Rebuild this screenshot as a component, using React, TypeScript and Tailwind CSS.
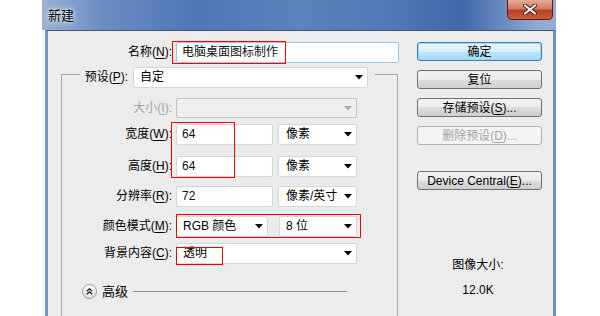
import React from "react";

const font = { fontFamily: '"Liberation Sans", "Noto Sans CJK SC", sans-serif' };

function Key({ k }: { k: string }) {
  return <span className="underline underline-offset-[2px]">{k}</span>;
}

function Arrow({ disabled = false }: { disabled?: boolean }) {
  return (
    <svg width="8" height="5" viewBox="0 0 8 5" className="shrink-0">
      <path d="M0 0H8L4 4.5Z" fill={disabled ? "#a9a9a9" : "#000"} />
    </svg>
  );
}

type SelectProps = {
  w: string;
  text?: string;
  disabled?: boolean;
  pad?: string;
};

function Select({ w, text = "", disabled = false, pad = "pl-[6px]" }: SelectProps) {
  return (
    <div
      className={`${w} h-[21px] flex items-center justify-between ${pad} pr-[4px] rounded-[2px] border ${
        disabled ? "bg-[#efefef] border-[#c4c4c4]" : "bg-white border-[#d3d6db]"
      }`}
    >
      <span className="text-black">{text}</span>
      <Arrow disabled={disabled} />
    </div>
  );
}

function Input({ w, text, focus = false }: { w: string; text: string; focus?: boolean }) {
  return (
    <div
      className={`${w} h-[21px] flex items-center pl-[5px] bg-white rounded-[2px] border ${
        focus ? "border-[#9fc2e6]" : "border-[#d3d6db]"
      }`}
    >
      <span className="text-[#111]">{text}</span>
    </div>
  );
}

function Label({ children, w = "w-[110px]", dim = false }: { children: React.ReactNode; w?: string; dim?: boolean }) {
  return (
    <div className={`${w} shrink-0 text-right ${dim ? "text-[#a3a3a3]" : "text-black"}`}>{children}</div>
  );
}

function Btn({ children, primary = false, disabled = false }: { children: React.ReactNode; primary?: boolean; disabled?: boolean }) {
  let cls =
    "border-[#707070] bg-[linear-gradient(#f2f2f2_0%,#ebebeb_50%,#dddddd_50%,#cfcfcf_100%)] text-black";
  if (primary)
    cls =
      "border-[#3c7fb1] bg-[linear-gradient(#eaf6fd_0%,#d9f0fc_50%,#bee6fd_50%,#a7d9f5_100%)] text-black shadow-[inset_0_0_0_1px_#9fd6f5]";
  if (disabled) cls = "border-[#adb2b5] bg-[#f4f4f4] text-[#a3a3a3]";
  return (
    <div className={`w-[125px] h-[19px] flex items-center justify-center rounded-[3px] border ${cls}`}>
      {children}
    </div>
  );
}

export default function App() {
  return (
    <div className="w-[600px] h-[316px] bg-white overflow-hidden text-[12px] leading-none" style={font}>
      <div className="ml-[42px] w-[514px]">
        {/* title bar */}
        <div className="h-[30px] flex justify-between bg-[linear-gradient(90deg,#9ab2d6_0%,#6a8cc3_12%,#4f77b6_30%,#5d83bd_50%,#5278b6_68%,#3f69aa_82%,#93acd3_97%)]">
          <div className="pl-[6px] pt-[9px] text-[13px] text-black [text-shadow:0_0_6px_#fff,0_0_3px_#fff]">新建</div>
          <div className="mr-[3px] w-[46px] h-[20px] flex items-center justify-center rounded-b-[5px] border border-t-0 border-[#5b1d12] bg-[linear-gradient(#e9ab97_0%,#d27a62_45%,#bb3f25_55%,#cf5a3f_100%)]">
            <svg width="14" height="11" viewBox="0 0 14 11">
              <path d="M2 1.5L12 9.5M12 1.5L2 9.5" stroke="#4a1a12" strokeWidth="4" strokeLinecap="round" />
              <path d="M2 1.5L12 9.5M12 1.5L2 9.5" stroke="#fff" strokeWidth="2.2" strokeLinecap="round" />
            </svg>
          </div>
        </div>

        {/* frame + body */}
        <div className="flex bg-[#f3f6fa]">
          <div className="w-[3px] shrink-0" />
          <div className="relative flex-1 h-[300px] overflow-hidden bg-[#ececec] border-l-[3px] border-r-[3px] border-l-[#7a97c2] border-r-[#6f8fbf] border-t border-t-[#3f5678]">
            <div className="flex">
              {/* left column */}
              <div className="w-[369px] shrink-0">
                <div className="mt-[10px] h-[22px] flex items-center">
                  <Label w="w-[124px]">
                    名称(<Key k="N" />):
                  </Label>
                  <div className="ml-[4px]">
                    <Input w="w-[223px]" text="电脑桌面图标制作" focus />
                  </div>
                </div>

                <div className="mt-[11px] ml-[13px] w-[337px] border-l border-t border-r border-[#a7a7a7] pb-[40px]">
                  {/* preset legend */}
                  <div className="-mt-[9px] ml-[18px] h-[22px] flex items-center">
                    <div className="h-full w-[53px] flex items-center justify-end pr-[5px] bg-[#ececec]">
                      预设(<Key k="P" />):
                    </div>
                    <Select w="w-[235px]" text="自定" />
                    <div className="h-full w-[7px] bg-[#ececec]" />
                  </div>

                  <div className="mt-[9px] h-[22px] flex items-center">
                    <Label dim>
                      大小(<Key k="I" />):
                    </Label>
                    <div className="ml-[4px]">
                      <Select w="w-[181px] !h-[20px]" disabled />
                    </div>
                  </div>

                  <div className="mt-[4px] h-[22px] flex items-center">
                    <Label>
                      宽度(<Key k="W" />):
                    </Label>
                    <div className="ml-[4px] flex items-center gap-[5px]">
                      <Input w="w-[97px]" text="64" />
                      <Select w="w-[79px]" text="像素" pad="pl-[7px]" />
                    </div>
                  </div>

                  <div className="mt-[10px] h-[22px] flex items-center">
                    <Label>
                      高度(<Key k="H" />):
                    </Label>
                    <div className="ml-[4px] flex items-center gap-[5px]">
                      <Input w="w-[97px]" text="64" />
                      <Select w="w-[79px]" text="像素" pad="pl-[7px]" />
                    </div>
                  </div>

                  <div className="mt-[8px] h-[22px] flex items-center">
                    <Label>
                      分辨率(<Key k="R" />):
                    </Label>
                    <div className="ml-[4px] flex items-center gap-[5px]">
                      <Input w="w-[97px]" text="72" />
                      <Select w="w-[79px]" text="像素/英寸" pad="pl-[7px]" />
                    </div>
                  </div>

                  <div className="mt-[8px] h-[22px] flex items-center">
                    <Label>
                      颜色模式(<Key k="M" />):
                    </Label>
                    <div className="ml-[4px] flex items-center gap-[11px]">
                      <Select w="w-[92px]" text="RGB 颜色" />
                      <Select w="w-[78px]" text="8 位" />
                    </div>
                  </div>

                  <div className="mt-[5px] h-[22px] flex items-center">
                    <Label>
                      背景内容(<Key k="C" />):
                    </Label>
                    <div className="ml-[4px]">
                      <Select w="w-[181px]" text="透明" />
                    </div>
                  </div>

                  <div className="mt-[19px] ml-[20px] w-[265px] h-[16px] flex items-center gap-[5px]">
                    <div className="w-[15px] h-[15px] shrink-0 rounded-full border border-[#9a9a9a] bg-[linear-gradient(#ffffff,#dcdcdc)] flex items-center justify-center">
                      <svg width="7" height="7" viewBox="0 0 7 7">
                        <path d="M0.8 3.2L3.5 0.8L6.2 3.2M0.8 6.2L3.5 3.8L6.2 6.2" stroke="#222" strokeWidth="1.3" fill="none" />
                      </svg>
                    </div>
                    <span className="text-[13px] text-black">高级</span>
                    <div className="flex-1 h-px bg-[#8f8f8f]" />
                  </div>
                </div>
              </div>

              {/* right column */}
              <div className="w-[125px] pt-[11px] flex flex-col">
                <Btn primary>确定</Btn>
                <div className="mt-[9px]">
                  <Btn>复位</Btn>
                </div>
                <div className="mt-[9px]">
                  <Btn>
                    存储预设(<Key k="S" />)...
                  </Btn>
                </div>
                <div className="mt-[9px]">
                  <Btn disabled>
                    删除预设(<Key k="D" />)...
                  </Btn>
                </div>
                <div className="mt-[26px]">
                  <Btn>
                    Device Central(<Key k="E" />)...
                  </Btn>
                </div>
                <div className="mt-[69px] text-center pr-[3px] text-black">图像大小:</div>
                <div className="mt-[13px] text-center pr-[3px] text-black">12.0K</div>
              </div>
            </div>

            {/* red annotation boxes */}
            <div className="absolute left-[124px] top-[10px] w-[114px] h-[23px] border border-[#f00]" />
            <div className="absolute left-[123px] top-[91px] w-[64px] h-[56px] border border-[#f00]" />
            <div className="absolute left-[128px] top-[183px] w-[185px] h-[24px] border border-[#f00]" />
            <div className="absolute left-[128px] top-[216px] w-[47px] h-[18px] border border-[#f00]" />
          </div>
        </div>
      </div>
    </div>
  );
}
